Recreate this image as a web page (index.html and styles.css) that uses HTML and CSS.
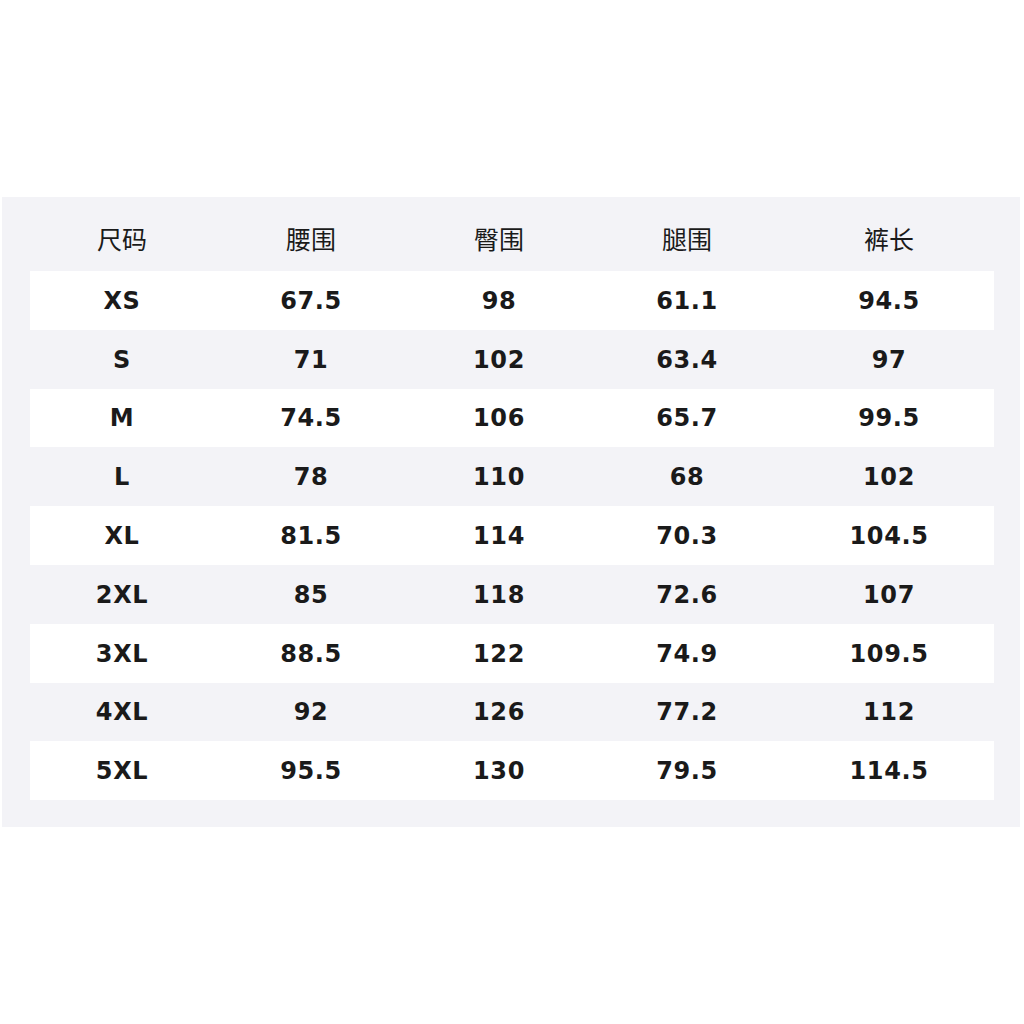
FILE: index.html
```html
<!DOCTYPE html>
<html lang="zh">
<head>
<meta charset="utf-8">
<link rel="stylesheet" href="styles.css">
</head>
<body>
<div class="page">
  <div class="panel">
    <div class="row head">
      <div>尺码</div><div>腰围</div><div>臀围</div><div>腿围</div><div>裤长</div>
    </div>
    <div class="row w"><div>XS</div><div>67.5</div><div>98</div><div>61.1</div><div>94.5</div></div>
    <div class="row"><div>S</div><div>71</div><div>102</div><div>63.4</div><div>97</div></div>
    <div class="row w"><div>M</div><div>74.5</div><div>106</div><div>65.7</div><div>99.5</div></div>
    <div class="row"><div>L</div><div>78</div><div>110</div><div>68</div><div>102</div></div>
    <div class="row w"><div>XL</div><div>81.5</div><div>114</div><div>70.3</div><div>104.5</div></div>
    <div class="row"><div>2XL</div><div>85</div><div>118</div><div>72.6</div><div>107</div></div>
    <div class="row w"><div>3XL</div><div>88.5</div><div>122</div><div>74.9</div><div>109.5</div></div>
    <div class="row"><div>4XL</div><div>92</div><div>126</div><div>77.2</div><div>112</div></div>
    <div class="row w"><div>5XL</div><div>95.5</div><div>130</div><div>79.5</div><div>114.5</div></div>
  </div>
</div>
</body>
</html>
```
FILE: styles.css
```css
html, body {
  margin: 0;
  padding: 0;
  background: #ffffff;
}
.page {
  width: 1024px;
  height: 1024px;
  padding-top: 197px;
  box-sizing: border-box;
}
.panel {
  margin-left: 2px;
  width: 1018px;
  height: 630px;
  background: #f3f3f7;
  padding: 0 26px 0 28px;
  box-sizing: border-box;
}
.row {
  display: grid;
  grid-template-columns: 184px 194px 182px 194px 210px;
  height: 58.8px;
  align-items: center;
  justify-items: center;
  font-family: "DejaVu Sans", sans-serif;
  font-weight: bold;
  font-size: 24px;
  color: #1a1a1a;
  letter-spacing: 0.6px;
  padding-top: 1px;
  box-sizing: border-box;
}
.row.w {
  background: #ffffff;
}
.row.head {
  height: 74px;
  font-family: "Noto Sans CJK SC", sans-serif;
  font-weight: normal;
  font-size: 25px;
  letter-spacing: 0;
  padding-top: 8px;
}
```
